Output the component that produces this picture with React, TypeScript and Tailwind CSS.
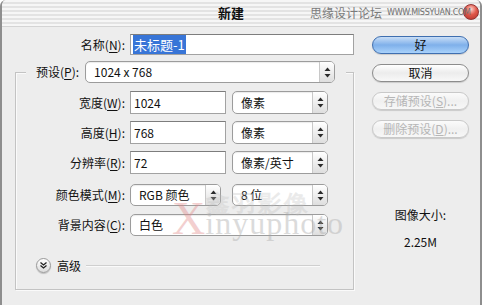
import type { ReactNode } from "react";

const font = "font-['Noto_Sans_CJK_SC','Noto_Sans',sans-serif]";

function Arrows() {
  return (
    <svg width="7" height="11" viewBox="0 0 7 11" className="block">
      <path d="M3.5 0.5 L6.5 4 H0.5Z" fill="#2b2b2b" />
      <path d="M0.5 7 H6.5 L3.5 10.5Z" fill="#2b2b2b" />
    </svg>
  );
}

function Select({ value, className }: { value: string; className: string }) {
  return (
    <div
      className={`flex items-stretch overflow-hidden rounded-[5px] border border-[#9c9c9c] bg-white shadow-[inset_0_1px_1px_rgba(0,0,0,0.08)] ${className}`}
    >
      <span className="flex flex-1 items-center whitespace-nowrap pl-[8px] text-[12px] text-[#111]">{value}</span>
      <span className="flex w-[15px] items-center justify-center border-l border-[#c8c8c8] bg-gradient-to-b from-[#ffffff] to-[#dedede]">
        <Arrows />
      </span>
    </div>
  );
}

function Field({ value, className }: { value: string; className: string }) {
  return (
    <div
      className={`flex items-center border border-[#a2a2a2] border-t-[#7d7d7d] bg-white pl-[3px] text-[12px] text-[#111] ${className}`}
    >
      {value}
    </div>
  );
}

function Label({ children }: { children: ReactNode }) {
  return (
    <span className="w-[114px] shrink-0 whitespace-nowrap pr-[5px] text-right text-[12px] text-[#111]">{children}</span>
  );
}

function Key({ k }: { k: string }) {
  return (
    <>
      (<span className="underline underline-offset-2">{k}</span>):
    </>
  );
}

function AquaButton({ children, kind }: { children: ReactNode; kind: "default" | "normal" | "disabled" }) {
  const style =
    kind === "default"
      ? "border-[#3f6fb0] bg-gradient-to-b from-[#c9def6] via-[#7fb0ea] to-[#a9d2fb] text-[#111]"
      : kind === "normal"
        ? "border-[#8c8c8c] bg-gradient-to-b from-[#ffffff] via-[#ececec] to-[#f8f8f8] text-[#111]"
        : "border-[#c9c9c9] bg-gradient-to-b from-[#fbfbfb] via-[#f0f0f0] to-[#f7f7f7] text-[#b6b6b6]";
  return (
    <div
      className={`flex h-[18px] w-[97px] items-center justify-center whitespace-nowrap rounded-full border text-[12px] leading-none shadow-[0_1px_1px_rgba(0,0,0,0.15)] ${style}`}
    >
      {children}
    </div>
  );
}

export default function App() {
  return (
    <div
      className={`relative h-[305px] w-[482px] overflow-hidden rounded-t-[6px] border-x-2 border-[#8e8e8e] bg-[#ededed] ${font}`}
    >
      {/* title bar */}
      <div className="relative flex h-[27px] items-center whitespace-nowrap border-b border-[#d4d4d4] bg-[repeating-linear-gradient(180deg,#f6f6f6_0px,#f6f6f6_2px,#e3e3e3_2px,#e3e3e3_4px)]">
        <span className="absolute top-[4px] right-[1px] h-[16px] w-[16px] rounded-full border border-[#8a2020] bg-[radial-gradient(circle_at_50%_30%,#ffd0c8_0%,#e0493a_45%,#a81c14_100%)] opacity-90" />
        <span className="ml-[216px] shrink-0 text-[13px] font-bold text-[#111]">新建</span>
        <span className="ml-[66px] shrink-0 text-[12px] text-[#7b7b7b]">思缘设计论坛</span>
        <span className="relative ml-[5px] shrink-0 font-['DejaVu_Sans',sans-serif] text-[8px] tracking-[-0.3px] text-[#6f6f6f]">
          WWW.MISSYUAN.COM
        </span>
      </div>

      <div className="flex pt-[7px] pl-[13px]">
        {/* left column */}
        <div className="w-[339px]">
          <div className="flex h-[21px] items-center">
            <span className="w-[115px] shrink-0 whitespace-nowrap pr-[5px] text-right text-[12px] text-[#111]">
              名称<Key k="N" />
            </span>
            <div className="flex h-[21px] w-[225px] items-center border border-[#a2a2a2] border-t-[#7d7d7d] bg-white pl-[2px] text-[13px]">
              <span className="bg-[#3875d7] px-[1px] text-white">未标题-1</span>
            </div>
          </div>

          <div className="mt-[17px] border border-[#c3c3c3] pb-[16px] shadow-[inset_1px_1px_0_#fafafa,1px_1px_0_#fafafa]">
            <div className="-mt-[12px] ml-[10px] flex h-[22px] w-[320px] items-center bg-[#ededed] px-[10px]">
              <span className="whitespace-nowrap pr-[6px] text-[12px] text-[#111]">
                预设<Key k="P" />
              </span>
              <Select value="1024 x 768" className="h-[22px] w-[250px]" />
            </div>

            <div className="mt-[8px] flex flex-col gap-[7px]">
              <div className="flex h-[23px] items-center">
                <Label>
                  宽度<Key k="W" />
                </Label>
                <Field value="1024" className="h-[23px] w-[96px]" />
                <Select value="像素" className="ml-[6px] h-[23px] w-[96px]" />
              </div>
              <div className="flex h-[23px] items-center">
                <Label>
                  高度<Key k="H" />
                </Label>
                <Field value="768" className="h-[23px] w-[96px]" />
                <Select value="像素" className="ml-[6px] h-[23px] w-[96px]" />
              </div>
              <div className="flex h-[23px] items-center">
                <Label>
                  分辨率<Key k="R" />
                </Label>
                <Field value="72" className="h-[23px] w-[96px]" />
                <Select value="像素/英寸" className="ml-[6px] h-[23px] w-[96px]" />
              </div>
            </div>

            <div className="mt-[10px] flex flex-col gap-[8px]">
              <div className="flex h-[22px] items-center">
                <Label>
                  颜色模式<Key k="M" />
                </Label>
                <Select value="RGB 颜色" className="h-[22px] w-[91px]" />
                <Select value="8 位" className="ml-[11px] h-[22px] w-[96px]" />
              </div>
              <div className="flex h-[22px] items-center">
                <Label>
                  背景内容<Key k="C" />
                </Label>
                <Select value="白色" className="h-[22px] w-[198px]" />
              </div>
            </div>

            <div className="mt-[22px] flex h-[15px] items-center pl-[20px]">
              <span className="flex h-[15px] w-[15px] items-center justify-center rounded-full border border-[#9a9a9a] bg-gradient-to-b from-[#ffffff] to-[#dcdcdc] shadow-[0_1px_1px_rgba(0,0,0,0.2)]">
                <svg width="7" height="7" viewBox="0 0 7 7">
                  <path d="M0.5 0.5 L3.5 3 L6.5 0.5 M0.5 3.5 L3.5 6 L6.5 3.5" stroke="#222" strokeWidth="1.3" fill="none" />
                </svg>
              </span>
              <span className="ml-[6px] text-[12px] text-[#111]">高级</span>
              <span className="ml-[5px] h-px w-[234px] bg-[#cfcfcf] shadow-[0_1px_0_#fafafa]" />
            </div>
          </div>
        </div>

        {/* right column */}
        <div className="ml-[18px] flex w-[97px] flex-col items-center">
          <div className="mt-[2px] flex flex-col gap-[10px]">
            <AquaButton kind="default">好</AquaButton>
            <AquaButton kind="normal">取消</AquaButton>
            <AquaButton kind="disabled">
              存储预设(<span className="underline">S</span>)...
            </AquaButton>
            <AquaButton kind="disabled">
              删除预设(<span className="underline">D</span>)...
            </AquaButton>
          </div>
          <span className="mt-[68px] text-[12px] text-[#111]">图像大小:</span>
          <span className="mt-[9px] text-[12px] text-[#111]">2.25M</span>
        </div>
      </div>

      {/* watermark */}
      <div className="pointer-events-none absolute top-[186px] left-[204px] font-['Liberation_Serif',serif] text-[24px] font-bold tracking-[2px] text-[#bdbdbd] opacity-30">
        鑫羽影像
      </div>
      <div className="pointer-events-none absolute top-[196px] left-[170px] flex items-baseline font-['Liberation_Serif',serif] opacity-40">
        <span className="text-[46px] leading-none text-[#e28a8a]">X</span>
        <span className="text-[32px] leading-none tracking-[1px] text-[#a8a8a8]">inyuphoto</span>
      </div>
    </div>
  );
}
